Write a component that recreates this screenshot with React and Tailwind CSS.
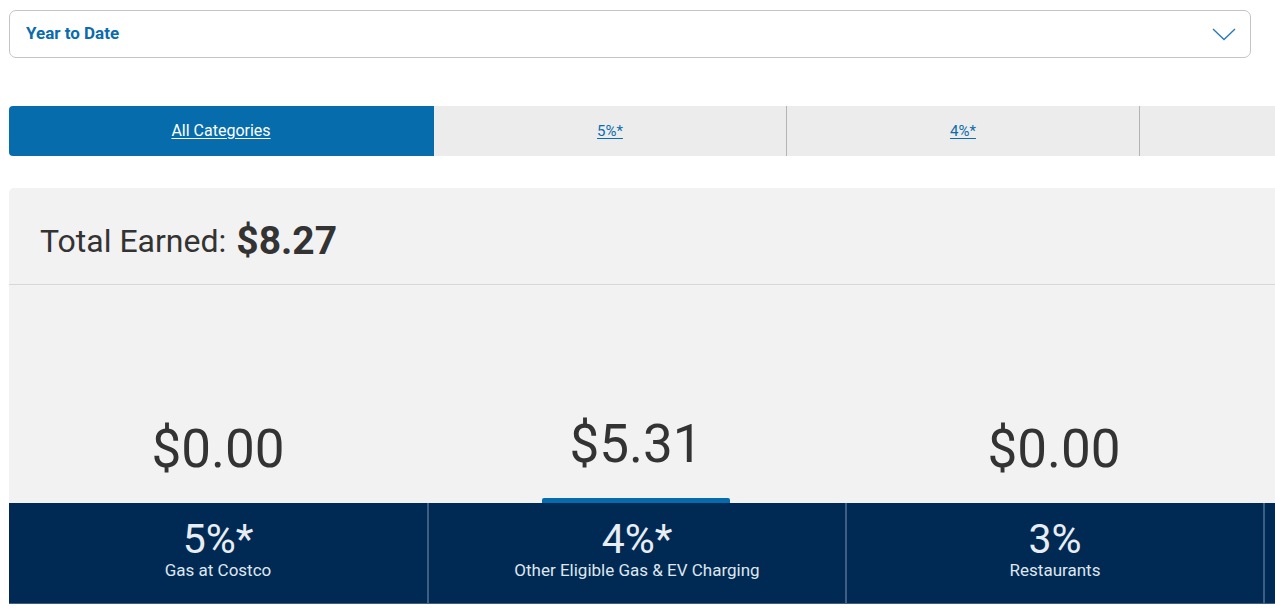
import React from "react";

const cols = [
  { amount: "$0.00", bar: 0, pct: "5%*", label: "Gas at Costco" },
  { amount: "$5.31", bar: 5, pct: "4%*", label: "Other Eligible Gas & EV Charging" },
  { amount: "$0.00", bar: 0, pct: "3%", label: "Restaurants" },
];

export default function App() {
  return (
    <div className="w-[1275px] h-[611px] overflow-hidden bg-white text-[#333]" style={{ fontFamily: "Roboto, 'Open Sans', sans-serif" }}>
      <div className="pl-[9px] pt-[10px]">
        <div className="w-[1242px] h-[48px] border border-[#c4c4c4] rounded-[7px] flex items-center justify-between pl-[16px] pr-[14px]">
          <span className="text-[17px] font-bold text-[#0b6cac]">Year to Date</span>
          <svg width="24" height="13" viewBox="0 0 24 13" fill="none">
            <path d="M1 1 L12 11.5 L23 1" stroke="#2a7ab8" strokeWidth="1.4" />
          </svg>
        </div>

        <div className="mt-[48px] flex h-[50px] w-[1500px]">
          <div className="shrink-0 w-[424px] bg-[#066cac] rounded-l-[4px] flex items-center justify-center">
            <span className="text-white text-[16px] underline underline-offset-2">All Categories</span>
          </div>
          <div className="shrink-0 w-[353px] bg-[#ececec] border-l border-[#066cac] flex items-center justify-center">
            <span className="text-[#0b6cac] text-[15px] underline underline-offset-2">5%*</span>
          </div>
          <div className="shrink-0 w-[353px] bg-[#ececec] border-l border-[#b4b4b4] flex items-center justify-center">
            <span className="text-[#0b6cac] text-[15px] underline underline-offset-2">4%*</span>
          </div>
          <div className="shrink-0 w-[300px] bg-[#ececec] border-l border-[#b4b4b4]"></div>
        </div>

        <div className="mt-[32px] w-[1500px] bg-[#f2f2f2] rounded-tl-[5px]">
          <div className="h-[97px] border-b border-[#d8d8d8] flex items-center pl-[31px] pt-[10px]">
            <span className="text-[32px] text-[#333]">Total Earned:</span>
            <span className="text-[39px] font-bold text-[#333] ml-[10px]">$8.27</span>
          </div>
          <div className="h-[218px] flex items-end">
            {cols.map((c, i) => (
              <div key={i} className="shrink-0 w-[418px] flex flex-col items-center">
                <div className="text-[53px] leading-none text-[#333] mb-[27px]">{c.amount}</div>
                <div
                  className="w-[188px] bg-[#066cac] rounded-t-[2px]"
                  style={{ height: c.bar + "px" }}
                ></div>
              </div>
            ))}
          </div>
        </div>

        <div className="flex w-[1500px] h-[101px] bg-[#002a54] border-b border-[#3e5f82]">
          {cols.map((c, i) => (
            <div key={i} className={"shrink-0 w-[418px] flex flex-col items-center pt-[14px] " + (i > 0 ? "border-l-2 border-[#3e5f82]" : "")}>
              <div className="text-[41px] leading-[44px] text-[#e8edf3]">{c.pct}</div>
              <div className="text-[17px] leading-[18px] text-[#dfe6ee]">{c.label}</div>
            </div>
          ))}
          <div className="shrink-0 w-[200px] border-l-2 border-[#3e5f82]"></div>
        </div>
      </div>
    </div>
  );
}
